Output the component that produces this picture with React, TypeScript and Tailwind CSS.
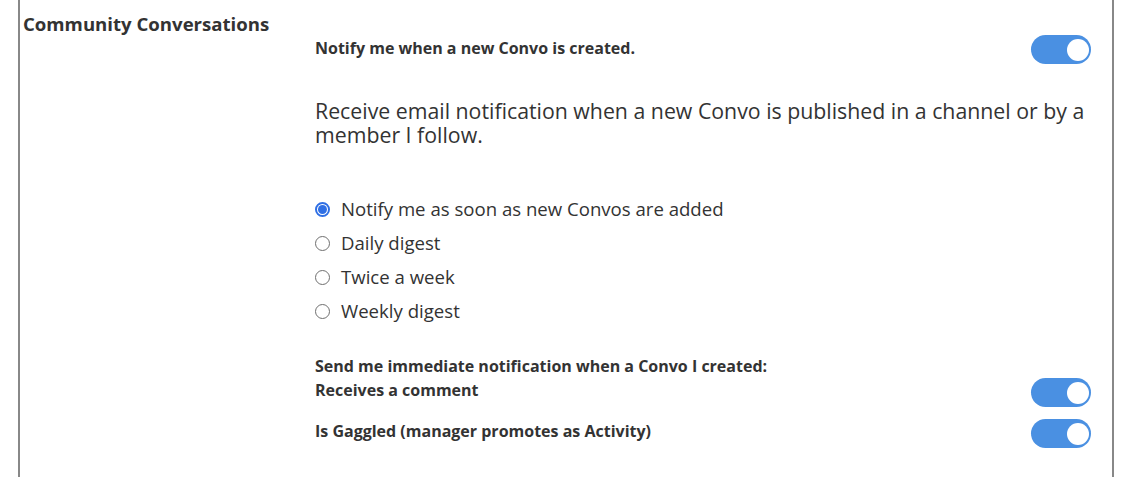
import React from "react";

const Toggle = () => (
  <div className="w-[60px] h-[29px] rounded-full bg-[#4a90e2] flex items-center justify-end pr-[2px] shrink-0">
    <div className="w-[22px] h-[22px] rounded-full bg-white" />
  </div>
);

const Radio = ({ checked, label }: { checked?: boolean; label: string }) => (
  <div className="flex items-center h-[34px]">
    {checked ? (
      <span className="w-[15px] h-[15px] rounded-full border-[2px] border-[#2f6fe4] bg-white flex items-center justify-center shrink-0">
        <span className="w-[9px] h-[9px] rounded-full bg-[#2f6fe4]" />
      </span>
    ) : (
      <span className="w-[15px] h-[15px] rounded-full border border-[#6f6f6f] bg-white shrink-0" />
    )}
    <span className="ml-[11px] text-[18.6px] leading-[24px] text-[#333]">{label}</span>
  </div>
);

export default function App() {
  return (
    <div
      className="w-[1128px] h-[477px] bg-white overflow-hidden"
      style={{ fontFamily: '"Open Sans", sans-serif' }}
    >
      <div className="ml-[18px] w-[1096px] h-[477px] border-x-2 border-[#888] flex">
        <div className="w-[295px] pl-[3px] pt-[12px] shrink-0">
          <div className="text-[18.6px] leading-[24px] font-bold text-[#333]">Community Conversations</div>
        </div>
        <div className="flex-1 pr-[21px] pt-[35px]">
          <div className="flex items-start justify-between">
            <div className="mt-[2px] text-[16px] leading-[22px] font-bold text-[#333]">
              Notify me when a new Convo is created.
            </div>
            <Toggle />
          </div>
          <div className="mt-[35px] text-[21.3px] leading-[24px] text-[#333]">
            Receive email notification when a new Convo is published in a channel or by a member I follow.
          </div>
          <div className="mt-[45px] flex flex-col">
            <Radio checked label="Notify me as soon as new Convos are added" />
            <Radio label="Daily digest" />
            <Radio label="Twice a week" />
            <Radio label="Weekly digest" />
          </div>
          <div className="mt-[26px] text-[16px] leading-[24px] font-bold text-[#333]">
            Send me immediate notification when a Convo I created:
          </div>
          <div className="flex items-start justify-between">
            <div className="text-[16px] leading-[24px] font-bold text-[#333]">Receives a comment</div>
            <Toggle />
          </div>
          <div className="mt-[12px] flex items-start justify-between">
            <div className="text-[16px] leading-[24px] font-bold text-[#333]">
              Is Gaggled (manager promotes as Activity)
            </div>
            <Toggle />
          </div>
        </div>
      </div>
    </div>
  );
}
